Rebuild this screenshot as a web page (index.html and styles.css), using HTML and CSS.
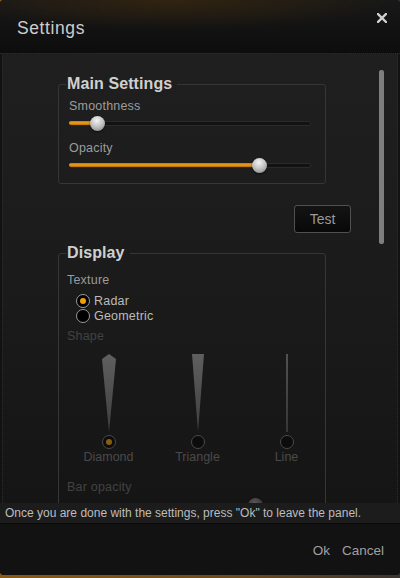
FILE: index.html
```html
<!DOCTYPE html>
<html lang="en">
<head>
    <meta charset="UTF-8">
    <meta name="viewport" content="width=device-width, initial-scale=1.0">
    <title>Settings</title>
    <link rel="stylesheet" href="styles.css">
</head>
<body>
    <div class="window">
        <div class="titlebar">
            <span class="title">Settings</span>
            <svg class="close" width="10" height="10" viewBox="0 0 10 10">
                <path d="M1 1 L9 9 M9 1 L1 9" stroke="#d0d0d0" stroke-width="2.4" stroke-linecap="square"/>
            </svg>
        </div>

        <div class="content">
            <div class="pane">
                <fieldset class="group main">
                    <legend>Main Settings</legend>
                    <div class="label">Smoothness</div>
                    <div class="slider">
                        <div class="fill" style="width:28px"></div>
                        <div class="thumb" style="left:28px"></div>
                    </div>
                    <div class="label">Opacity</div>
                    <div class="slider">
                        <div class="fill" style="width:190px"></div>
                        <div class="thumb" style="left:190px"></div>
                    </div>
                </fieldset>

                <div class="test-row"><button class="btn-test">Test</button></div>

                <fieldset class="group display">
                    <legend>Display</legend>
                    <div class="label sub">Texture</div>
                    <div class="radios">
                        <div class="radio-row"><span class="radio checked"></span>Radar</div>
                        <div class="radio-row"><span class="radio"></span>Geometric</div>
                    </div>
                    <div class="label sub off">Shape</div>
                    <div class="shapes">
                        <div class="shape">
                            <svg width="16" height="78" viewBox="0 0 16 78">
                                <defs>
                                    <linearGradient id="ng" x1="0" y1="0" x2="0" y2="1">
                                        <stop offset="0" stop-color="#5f5f5f"/>
                                        <stop offset="1" stop-color="#3e3e3e"/>
                                    </linearGradient>
                                </defs>
                                <polygon points="8,0 15,5 8,78 1,5" fill="url(#ng)"/>
                            </svg>
                            <span class="radio off checked"></span>
                            <span class="shape-name">Diamond</span>
                        </div>
                        <div class="shape">
                            <svg width="16" height="78" viewBox="0 0 16 78">
                                <polygon points="2,0 14,0 8,78" fill="url(#ng)"/>
                            </svg>
                            <span class="radio off"></span>
                            <span class="shape-name">Triangle</span>
                        </div>
                        <div class="shape">
                            <svg width="16" height="78" viewBox="0 0 16 78">
                                <rect x="7.2" y="0" width="1.6" height="78" fill="url(#ng)"/>
                            </svg>
                            <span class="radio off"></span>
                            <span class="shape-name">Line</span>
                        </div>
                    </div>
                    <div class="label sub off bar">Bar opacity</div>
                    <div class="slider dim">
                        <div class="fill" style="width:186px"></div>
                        <div class="thumb" style="left:186px"></div>
                    </div>
                </fieldset>
            </div>
            <div class="scrollbar"><div class="scroll-thumb"></div></div>
        </div>

        <div class="message">Once you are done with the settings, press "Ok" to leave the panel.</div>

        <div class="footer">
            <button class="btn-link">Ok</button>
            <button class="btn-link">Cancel</button>
        </div>
    </div>
</body>
</html>
```

FILE: styles.css
```css
html, body { margin: 0; padding: 0; }
body { width: 400px; height: 578px; overflow: hidden; background: linear-gradient(90deg, #8a5a14 0%, #6d4a1c 60%, #3a3430 100%); font-family: "Liberation Sans", Arial, sans-serif; }

.window { width: 400px; height: 575px; display: flex; flex-direction: column; background: #121212; border-radius: 4px; overflow: hidden; }

.titlebar { height: 54px; flex: none; display: flex; align-items: flex-start; justify-content: space-between; padding: 0 13px 0 17px; box-sizing: border-box; border-bottom: 1px dotted #2a2a2a;
    background: radial-gradient(ellipse 220px 30px at 170px 0, rgba(70,45,10,0.55), rgba(0,0,0,0) 100%), linear-gradient(#181818, #0d0d0d); }
.title { color: #cdcdcd; font-size: 17.5px; line-height: 20px; margin-top: 18px; letter-spacing: 0.6px; }
.close { margin-top: 13px; }

.content { flex: 1; min-height: 0; display: flex; overflow: hidden; border-left: 1px dotted #2c2c2c; border-right: 1px dotted #2c2c2c; margin: 0 2px; background: linear-gradient(#1f1f1f, #1b1b1b 50%, #151515); }
.pane { flex: 1; padding: 21px 0 0 55px; }
.scrollbar { width: 20px; flex: none; padding-top: 16px; }
.scroll-thumb { width: 5px; height: 174px; margin-left: 2px; background: #7e7e7e; border-radius: 2px; }

.group { margin: 0; width: 252px; min-width: 0; border: 1px solid #363636; border-radius: 3px; padding: 0 7px 12px 7px; }
.group.main { padding-bottom: 0; }
.group legend { color: #d0d0d0; font-size: 16px; font-weight: bold; line-height: 18px; padding: 0 5px 0 1px; letter-spacing: 0.1px; }

.label { color: #9c9c9c; font-size: 12.5px; line-height: 14px; margin: 6px 0 3px 3px; letter-spacing: 0.2px; }
.label.sub { margin-left: 1px; color: #9a9a9a; }
.label.off { color: #424242; }

.slider { position: relative; height: 14px; width: 242px; margin-left: 3px; margin-bottom: 11px; }
.slider::before { content: ""; position: absolute; left: 0; right: 0; top: 5px; height: 3px; background: #121212; border: 1px solid #2a2a2a; border-radius: 2px; }
.fill { position: absolute; left: 0; top: 5px; height: 4px; background: linear-gradient(#c07808, #f0a020 50%, #b06a05); border-radius: 2px; }
.thumb { position: absolute; top: 0; width: 15px; height: 15px; margin-left: -7px; border-radius: 50%; background: radial-gradient(circle at 45% 30%, #f4f4f4, #c4c4c4 45%, #7a7a7a 100%); box-shadow: 0 1px 2px rgba(0,0,0,0.6); }
.slider.dim .fill { background: #3a2a10; }
.slider.dim .thumb { background: radial-gradient(circle at 45% 30%, #555, #333 70%); }

.test-row { width: 293px; display: flex; justify-content: flex-end; margin: 21px 0 11px; }
.btn-test { width: 57px; height: 28px; background: linear-gradient(#141414, #080808); border: 1px solid #505050; border-radius: 3px; color: #9a9a9a; font-family: inherit; font-size: 14px; padding: 0; }

.display .label.sub:first-of-type { margin-top: 11px; }
.radios { margin: 6px 0 0 10px; }
.radio-row { display: flex; align-items: center; height: 15px; color: #bcbcbc; font-size: 12.5px; gap: 4px; letter-spacing: 0.2px; }
.radio { width: 12px; height: 12px; border: 1px solid #9a9a9a; border-radius: 50%; background: #000; display: flex; align-items: center; justify-content: center; flex: none; }
.radio.checked::after { content: ""; width: 6px; height: 6px; border-radius: 50%; background: #f29d0a; }
.radio.off { border-color: #4a4a4a; background: #0c0c0c; }
.radio.off.checked::after { background: #8a5c12; }

.shapes { display: grid; grid-template-columns: 89px 89px 89px; width: 267px; margin: 11px 0 0 -2px; }
.shape { display: flex; flex-direction: column; align-items: center; }
.shape svg { display: block; }
.shape .radio { margin-top: 3px; }
.shape-name { color: #4a4a4a; font-size: 12.5px; line-height: 14px; margin-top: 1px; }
.label.bar { margin-top: 16px; }
.slider.dim { margin-top: 4px; }

.message { height: 21px; flex: none; background: #1c1c1c; color: #bdbdbd; font-size: 12px; line-height: 21px; padding-left: 5px; white-space: nowrap; border-bottom: 1px solid #0a0a0a; box-sizing: border-box; }

.footer { height: 51px; flex: none; display: flex; justify-content: flex-end; align-items: center; gap: 12px; padding: 0 16px 0 0; background: #121212; }
.btn-link { background: none; border: none; color: #a0a0a0; font-family: inherit; font-size: 13.5px; padding: 0; margin-top: 2px; }
```
